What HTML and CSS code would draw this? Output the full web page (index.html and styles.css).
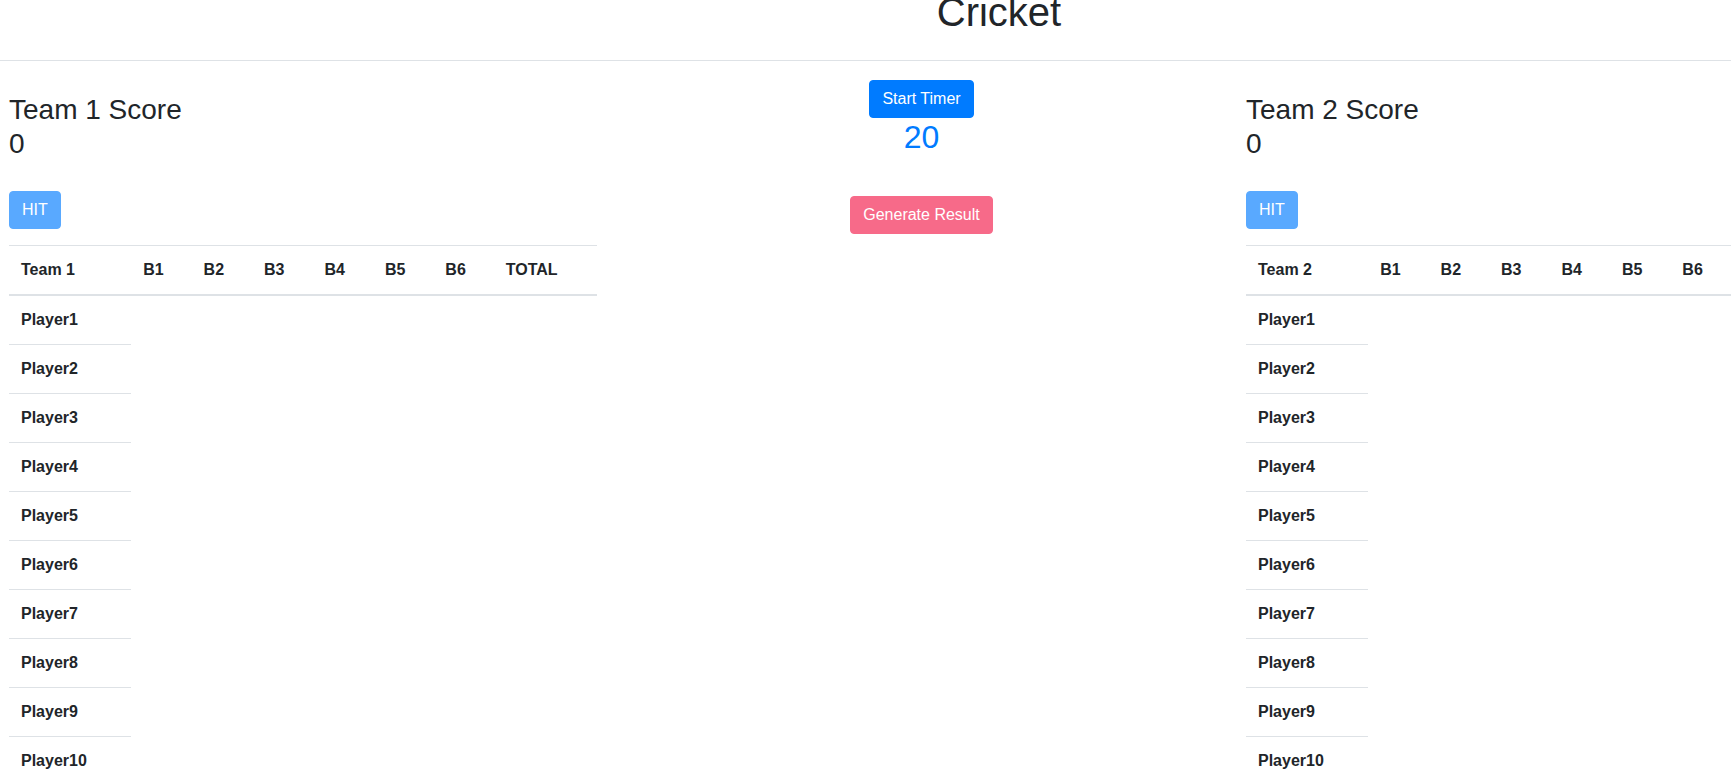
FILE: index.html
```html
<!DOCTYPE html>
<html lang="en">
<head>
<meta charset="utf-8">
<title>Cricket</title>
<link rel="stylesheet" href="styles.css">
</head>
<body>
<header class="site-header">
  <h1 class="title">Cricket</h1>
</header>
<main class="board">
  <section class="team">
    <h3 class="score">Team 1 Score<br>0</h3>
    <button class="btn btn-hit" disabled>HIT</button>
    <table class="score-table">
      <thead>
        <tr><th>Team 1</th><th>B1</th><th>B2</th><th>B3</th><th>B4</th><th>B5</th><th>B6</th><th>TOTAL</th></tr>
      </thead>
      <tbody>
        <tr><th>Player1</th></tr>
        <tr><th>Player2</th></tr>
        <tr><th>Player3</th></tr>
        <tr><th>Player4</th></tr>
        <tr><th>Player5</th></tr>
        <tr><th>Player6</th></tr>
        <tr><th>Player7</th></tr>
        <tr><th>Player8</th></tr>
        <tr><th>Player9</th></tr>
        <tr><th>Player10</th></tr>
      </tbody>
    </table>
  </section>
  <section class="center">
    <button class="btn btn-primary">Start Timer</button>
    <h2 class="timer">20</h2>
    <button class="btn btn-result" disabled>Generate Result</button>
  </section>
  <section class="team">
    <h3 class="score">Team 2 Score<br>0</h3>
    <button class="btn btn-hit" disabled>HIT</button>
    <table class="score-table">
      <thead>
        <tr><th>Team 2</th><th>B1</th><th>B2</th><th>B3</th><th>B4</th><th>B5</th><th>B6</th><th>TOTAL</th></tr>
      </thead>
      <tbody>
        <tr><th>Player1</th></tr>
        <tr><th>Player2</th></tr>
        <tr><th>Player3</th></tr>
        <tr><th>Player4</th></tr>
        <tr><th>Player5</th></tr>
        <tr><th>Player6</th></tr>
        <tr><th>Player7</th></tr>
        <tr><th>Player8</th></tr>
        <tr><th>Player9</th></tr>
        <tr><th>Player10</th></tr>
      </tbody>
    </table>
  </section>
</main>
</body>
</html>
```
FILE: styles.css
```css
html {
  overflow: hidden;
}
body {
  margin: 0;
  font-family: "Liberation Sans", Arial, sans-serif;
  font-size: 16px;
  line-height: 1.5;
  color: #212529;
  background: #fff;
}
.site-header {
  margin-top: -12px;
  padding-bottom: 24px;
  border-bottom: 1px solid #dee2e6;
}
.title {
  margin: 0;
  padding-left: 267px;
  text-align: center;
  font-size: 40px;
  font-weight: 400;
  line-height: 1.2;
}
.board {
  display: grid;
  grid-template-columns: 588px 649px 588px;
  padding: 19px 0 0 9px;
  align-items: start;
}
.team {
  display: flex;
  flex-direction: column;
  align-items: flex-start;
}
.score {
  margin: 13px 0 31px;
  font-size: 28px;
  font-weight: 400;
  line-height: 1.2;
}
.btn {
  display: inline-block;
  font-family: inherit;
  font-size: 16px;
  line-height: 24px;
  padding: 6px 12px;
  border: 1px solid transparent;
  border-radius: 4px;
  color: #fff;
  cursor: pointer;
}
.btn-hit {
  background: #59a9ff;
  border-color: #59a9ff;
  margin-bottom: 16px;
}
.btn-primary {
  background: #007bff;
  border-color: #007bff;
}
.btn-result {
  background: #f76a89;
  border-color: #f76a89;
  margin-top: 32px;
}
.center {
  display: flex;
  flex-direction: column;
  align-items: center;
}
.timer {
  margin: 0 0 8px;
  font-size: 32px;
  font-weight: 400;
  line-height: 1.2;
  color: #007bff;
}
.score-table {
  width: 100%;
  border-collapse: collapse;
}
.score-table th {
  padding: 12px;
  text-align: left;
  vertical-align: top;
  border-top: 1px solid #dee2e6;
  font-weight: 700;
}
.score-table thead th {
  vertical-align: bottom;
  border-bottom: 2px solid #dee2e6;
}
```
